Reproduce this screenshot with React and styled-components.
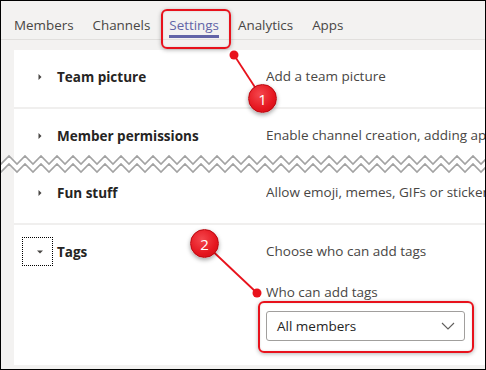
import React from "react";
import styled, { createGlobalStyle } from "styled-components";

const GlobalStyle = createGlobalStyle`
    html, body {
        margin: 0;
        padding: 0;
        background: #ffffff;
    }
    body {
        font-family: "Open Sans", "Noto Sans", "Liberation Sans", sans-serif;
    }
`;

const RED = "#e8121c";

const tabs = ["Members", "Channels", "Settings", "Analytics", "Apps"];

const Caret = ({ open }) => (
    <svg width="6" height="6" viewBox="0 0 6 6">
        {open
            ? <path d="M0 1.5 L6 1.5 L3 4.5 Z" fill="#484644" />
            : <path d="M1.5 0 L4.5 3 L1.5 6 Z" fill="#484644" />}
    </svg>
);

const Chevron = () => (
    <svg width="14" height="8" viewBox="0 0 14 8">
        <path d="M1 1 L7 7 L13 1" fill="none" stroke="#605e5c" strokeWidth="1.1" />
    </svg>
);

// разрыв страницы — две параллельные ломаные
const Zigzag = () => {
    const width = 484;
    const step = 8;
    const top = [];
    const bottom = [];
    for (let x = -8, i = 0; x <= width + 16; x += step, i++) {
        const y = i % 2 === 0 ? 4 : 12;
        top.push(`${x},${y}`);
        bottom.push(`${x},${y + 8}`);
    }
    const band = [...top, ...bottom.slice().reverse()].join(" ");
    return (
        <ZigzagStrip>
            <svg width={width} height="24" viewBox={`0 0 ${width} 24`}>
                <rect x="0" y="0" width="13" height="24" fill="#f3f2f1" />
                <rect x="13" y="0" width={width - 13} height="24" fill="#ffffff" />
                <polygon points={band} fill="#ffffff" />
                <polyline points={top.join(" ")} fill="none" stroke="#a3a3a3" strokeWidth="1.6" />
                <polyline points={bottom.join(" ")} fill="none" stroke="#a3a3a3" strokeWidth="1.6" />
            </svg>
        </ZigzagStrip>
    );
};

const SettingRow = ({ title, description, open, focused, edge, children }) => (
    <Row $edge={edge}>
        <RowHead>
            <CaretButton $focused={focused}><Caret open={open} /></CaretButton>
            <RowTitle>{title}</RowTitle>
        </RowHead>
        <RowBody>
            <Description>{description}</Description>
            {children}
        </RowBody>
    </Row>
);

const App = () => {
    return (
        <>
            <GlobalStyle />
            <Frame>
                <TabBar>
                    {tabs.map(t => <Tab key={t} $active={t === "Settings"}>{t}</Tab>)}
                </TabBar>

                <Panel>
                    <SettingRow title="Team picture" description="Add a team picture" />
                    <SettingRow title="Member permissions" description="Enable channel creation, adding apps and more" edge="cut" />
                </Panel>

                <Zigzag />

                <Panel>
                    <SettingRow title="Fun stuff" description="Allow emoji, memes, GIFs or stickers" edge="lead" />
                    <SettingRow title="Tags" description="Choose who can add tags" open focused edge="last">
                        <FieldLabel>Who can add tags</FieldLabel>
                        <Dropdown>
                            <span>All members</span>
                            <Chevron />
                        </Dropdown>
                    </SettingRow>
                </Panel>

                <Callout $x={160} $y={8} $w={70} $h={40} />
                <Callout $x={257} $y={300} $w={216} $h={52} />
                <Leaders width="484" height="368" viewBox="0 0 484 368">
                    <line x1="233" y1="54" x2="261" y2="97" stroke={RED} strokeWidth="1.8" />
                    <circle cx="233" cy="54" r="4.5" fill={RED} />
                    <line x1="203" y1="242" x2="256" y2="292" stroke={RED} strokeWidth="1.8" />
                    <circle cx="256" cy="292" r="4.5" fill={RED} />
                </Leaders>
                <Badge $x={247} $y={83}>1</Badge>
                <Badge $x={189} $y={228}>2</Badge>
            </Frame>
        </>
    );
};

export default App;

const Frame = styled.div`
    position: relative;
    width: 486px;
    height: 370px;
    box-sizing: border-box;
    border: 1px solid #000000;
    background: #f3f2f1;
    overflow: hidden;
`;

const TabBar = styled.div`
    display: flex;
    gap: 19px;
    height: 38px;
    padding: 0 13px;
    border-bottom: 1px solid #e1dfdd;
    margin-bottom: 10px;
`;

const Tab = styled.div`
    position: relative;
    padding-top: 14px;
    font-size: 13.4px;
    line-height: 20px;
    color: ${p => p.$active ? "#6264a7" : "#484644"};

    &::after {
        content: "";
        display: ${p => p.$active ? "block" : "none"};
        position: absolute;
        left: 0;
        right: 0;
        bottom: 1px;
        height: 3px;
        background: #6264a7;
    }
`;

const Panel = styled.div`
    margin-left: 13px;
    margin-right: -40px;
    background: #ffffff;
`;

const rowPadding = {
    cut: "12px 0 2px",
    lead: "2px 0 16px",
    last: "12px 0 24px",
};

const Row = styled.div`
    display: grid;
    grid-template-columns: 252px 1fr;
    padding: ${p => rowPadding[p.$edge] || "12px 0 16px"};
    border-bottom: ${p => p.$edge === "cut" || p.$edge === "last" ? "none" : "2px solid #f0efee"};
`;

const RowHead = styled.div`
    display: flex;
    align-items: center;
    height: 29px;
`;

const CaretButton = styled.div`
    display: flex;
    align-items: center;
    justify-content: center;
    box-sizing: border-box;
    width: 31px;
    height: 29px;
    margin-left: 8px;
    padding-left: 5px;
    border: 1px dotted ${p => p.$focused ? "#000000" : "transparent"};
`;

const RowTitle = styled.div`
    margin-left: 4px;
    font-size: 13.5px;
    font-weight: 700;
    color: #252423;
    white-space: nowrap;
`;

const RowBody = styled.div`
    display: flex;
    flex-direction: column;
    overflow: hidden;
`;

const Description = styled.div`
    height: 29px;
    line-height: 29px;
    font-size: 13.5px;
    color: #484644;
    white-space: nowrap;
`;

const FieldLabel = styled.div`
    margin-top: 16px;
    line-height: 20px;
    font-size: 13.5px;
    color: #484644;
`;

const Dropdown = styled.div`
    display: flex;
    align-items: center;
    justify-content: space-between;
    box-sizing: border-box;
    width: 199px;
    height: 30px;
    margin-top: 9px;
    padding: 0 9px 0 10px;
    border: 1px solid #a19f9d;
    border-radius: 3px;
    font-size: 13.5px;
    color: #252423;
`;

const ZigzagStrip = styled.div`
    height: 24px;
    line-height: 0;
`;

const Callout = styled.div`
    position: absolute;
    left: ${p => p.$x}px;
    top: ${p => p.$y}px;
    width: ${p => p.$w}px;
    height: ${p => p.$h}px;
    box-sizing: border-box;
    border: 2px solid ${RED};
    border-radius: 6px;
    box-shadow: 0 1px 4px rgba(0, 0, 0, 0.3), inset 0 0 2px rgba(0, 0, 0, 0.15);
`;

const Leaders = styled.svg`
    position: absolute;
    left: 0;
    top: 0;
    pointer-events: none;
`;

const Badge = styled.div`
    position: absolute;
    left: ${p => p.$x}px;
    top: ${p => p.$y}px;
    display: flex;
    align-items: center;
    justify-content: center;
    box-sizing: border-box;
    width: 29px;
    height: 29px;
    border-radius: 50%;
    border: 1.5px solid #b8060e;
    background: radial-gradient(circle at 40% 35%, #f4474d 0%, #e5161f 60%, #cc0a12 100%);
    box-shadow: 0 2px 4px rgba(0, 0, 0, 0.35);
    font-family: "Open Sans", sans-serif;
    font-size: 15px;
    color: #ffffff;
`;
